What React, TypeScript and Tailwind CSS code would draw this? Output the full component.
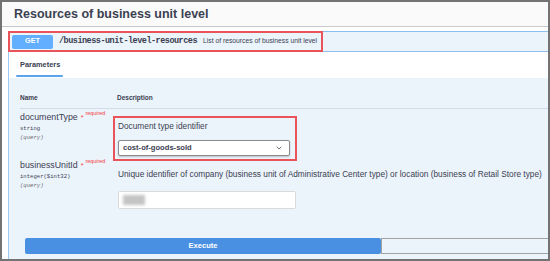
import { ChevronDown } from 'lucide-react';

function ParamName({
  name,
  type,
  className,
}: {
  name: string;
  type: string;
  className?: string;
}) {
  return (
    <div className={className}>
      <div className="flex items-start leading-[11px]">
        <span className="text-[8.8px] text-[#3b4151]">{name}</span>
        <span className="ml-[3px] text-[7px] text-[#f93e3e] leading-[11px]">*</span>
        <span className="ml-[2px] -mt-[3px] text-[5.4px] text-[#f93e3e] leading-[8px]">required</span>
      </div>
      <div className="font-['Liberation_Mono',monospace] text-[5.6px] text-[#3b4151] leading-[9px] mt-[1px]">
        {type}
      </div>
      <div className="font-['Liberation_Mono',monospace] italic text-[5.6px] text-[#6b6b6b] leading-[9px]">
        (query)
      </div>
    </div>
  );
}

export default function App() {
  return (
    <div className="w-[550px] h-[261px] overflow-hidden border-2 border-[#737373] bg-white font-['Liberation_Sans',Arial,sans-serif]">
      {/* Title */}
      <div className="h-[25px] bg-[#fafafa] border-b border-[#c9c9c9] flex items-center px-[12px]">
        <h1 className="text-[12.5px] font-bold text-[#3b4151] leading-none">
          Resources of business unit level
        </h1>
      </div>

      <div className="pt-[4px] pl-[6px]">
        <div className="border-l border-[#9ccaf5] h-[240px] flex flex-col">
          {/* Summary */}
          <div className="h-[21px] flex border-y border-[#8dc0f1] bg-[#ebf3fb]">
            <div className="-my-px -ml-px flex items-center border-2 border-[#e9545b] pl-[2px] pr-[4px]">
              <span className="w-[41px] h-[14px] rounded-[2px] bg-[#61affe] text-white text-[7.3px] font-bold flex items-center justify-center">
                GET
              </span>
              <span className="ml-[6px] font-['Liberation_Mono',monospace] font-bold text-[8.5px] tracking-[-0.5px] text-[#3b4151]">
                /business-unit-level-resources
              </span>
              <span className="ml-[6px] text-[6.75px] text-[#3b4151]">
                List of resources of business unit level
              </span>
            </div>
          </div>

          {/* Tabs */}
          <div className="h-[26px] shrink-0 bg-white pl-[7px] pt-[8px] flex items-start">
            <div className="flex flex-col w-[47px]">
              <span className="px-[4px] text-[7.4px] font-bold text-[#3b4151] leading-[10px]">
                Parameters
              </span>
              <span className="mt-[5px] h-[1.5px] bg-[#5aa3ef] rounded-full" />
            </div>
          </div>

          {/* Parameters */}
          <div className="flex-1 bg-[#ebf3fb] pl-[11px] pt-[16px]">
            <div className="flex border-b border-[#d3dce6] pb-[6px] leading-[8px] text-[6.5px] font-bold text-[#3b4151]">
              <span className="w-[97px]">Name</span>
              <span>Description</span>
            </div>

            <div className="grid grid-cols-[98px_1fr]">
              <ParamName name="documentType" type="string" className="pt-[3px]" />
              <div className="pt-[7px]">
                <div className="-ml-[5px] w-[184px] border-2 border-[#e9545b] p-[3px]">
                  <div className="text-[8.3px] text-[#3b4151] leading-[10px]">
                    Document type identifier
                  </div>
                  <div className="mt-[9px] w-[172px] h-[16px] bg-white border border-[#8a8a8a] rounded-[2px] shadow-[0_1px_2px_rgba(0,0,0,0.2)] flex items-center justify-between pl-[4px] pr-[6px]">
                    <span className="text-[7.6px] font-bold text-[#3b4151]">cost-of-goods-sold</span>
                    <ChevronDown size={8} strokeWidth={2.5} className="text-[#555]" />
                  </div>
                </div>
              </div>

              <ParamName name="businessUnitId" type="integer($int32)" className="-mt-[1px]" />
              <div className="pt-[8px]">
                <div className="text-[8.3px] text-[#3b4151] leading-[10px] whitespace-nowrap">
                  Unique identifier of company (business unit of Administrative Center type) or location (business of Retail Store type)
                </div>
                <div className="mt-[12px] w-[178px] h-[18px] bg-white border border-[#dadada] rounded-[2px] flex items-center pl-[4px]">
                  <div className="w-[22px] h-[10px] bg-[#c4c4c4] blur-[1.5px]" />
                </div>
              </div>
            </div>

            <div className="mt-[29px] ml-[5px] flex h-[16px]">
              <div className="w-[356px] h-full rounded-[2px] bg-[#4990e2] flex items-center justify-center text-white text-[7.6px] font-bold">
                Execute
              </div>
              <div className="flex-1 h-full border-y border-l border-[#a3a3a3]" />
            </div>
          </div>
        </div>
      </div>
    </div>
  );
}
